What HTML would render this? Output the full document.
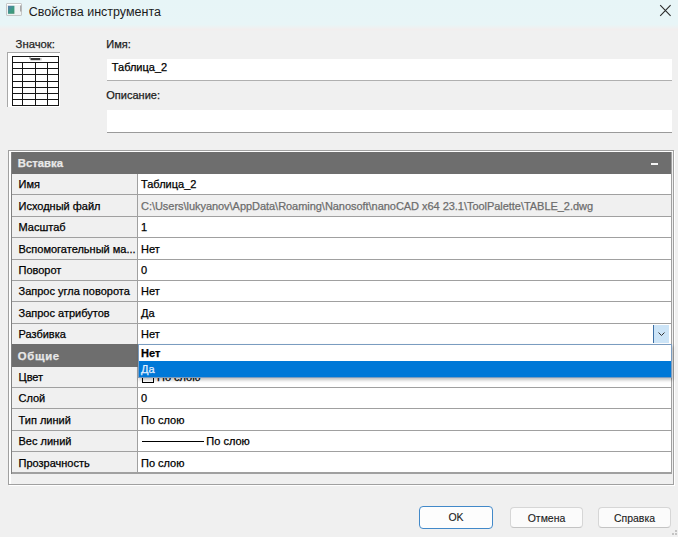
<!DOCTYPE html>
<html><head><meta charset="utf-8"><style>
html,body{margin:0;padding:0}
body{width:678px;height:537px;position:relative;overflow:hidden;background:#f0f0f0;font-family:"Liberation Sans", sans-serif}
.t{position:absolute;white-space:pre;line-height:20px;-webkit-text-stroke:0.25px currentColor}
.b{position:absolute}
</style></head><body>
<div class="b" style="left:0px;top:0px;width:678px;height:32px;background:linear-gradient(to bottom,#e7f5f7 0px,#e8f5f7 24.5px,#edf2f3 27px,#f2eeee 29.5px,#f0f0f0 31.5px)"></div>
<svg class="b" style="left:6px;top:3px" width="16" height="13" viewBox="0 0 16 13">
<defs><linearGradient id="g1" x1="0" y1="0" x2="1" y2="1"><stop offset="0" stop-color="#5c7bb0"/><stop offset="0.6" stop-color="#3a9c82"/><stop offset="1" stop-color="#4a8f70"/></linearGradient></defs>
<rect x="0.5" y="0.5" width="15" height="12" rx="0.5" fill="#eef2f2" stroke="#c6c8c8"/>
<line x1="1" y1="1.5" x2="15" y2="1.5" stroke="#fff"/>
<rect x="2" y="2.8" width="6.4" height="8" fill="url(#g1)"/>
<rect x="14" y="2.5" width="1.3" height="6" fill="#8c8c8c" opacity="0.7"/>
</svg>
<div class="t" style="left:28.80px;top:1.57px;font-size:12.5px;color:#1b1b1b;font-weight:400;-webkit-text-stroke:0">Свойства инструмента</div>
<svg class="b" style="left:658px;top:3px" width="15" height="15" viewBox="0 0 15 15">
<path d="M2.2 2.2 L12.6 12.8 M12.6 2.2 L2.2 12.8" stroke="#2b2b2b" stroke-width="1.1"/></svg>
<div class="t" style="left:15.60px;top:33.68px;font-size:11.3px;color:#262626;font-weight:400;">Значок:</div>
<div class="b" style="left:7px;top:52px;width:53px;height:55px;background:#fff;border-top:1px solid #a8a8a8;border-left:1px solid #a8a8a8;box-sizing:border-box"></div>
<svg class="b" style="left:0;top:0" width="70" height="110" viewBox="0 0 70 110"><line x1="12" y1="56.5" x2="59" y2="56.5" stroke="#151515" stroke-width="1"/><line x1="12" y1="62.5" x2="59" y2="62.5" stroke="#151515" stroke-width="1"/><line x1="12" y1="68.5" x2="59" y2="68.5" stroke="#151515" stroke-width="1"/><line x1="12" y1="74.5" x2="59" y2="74.5" stroke="#151515" stroke-width="1"/><line x1="12" y1="81.5" x2="59" y2="81.5" stroke="#151515" stroke-width="1"/><line x1="12" y1="87.5" x2="59" y2="87.5" stroke="#151515" stroke-width="1"/><line x1="12" y1="93.5" x2="59" y2="93.5" stroke="#151515" stroke-width="1"/><line x1="12" y1="99.5" x2="59" y2="99.5" stroke="#151515" stroke-width="1"/><line x1="12" y1="105.5" x2="59" y2="105.5" stroke="#151515" stroke-width="1"/><line x1="12.5" y1="56" x2="12.5" y2="106" stroke="#151515" stroke-width="1"/><line x1="58.5" y1="56" x2="58.5" y2="106" stroke="#151515" stroke-width="1"/><line x1="22.5" y1="62" x2="22.5" y2="105.5" stroke="#151515" stroke-width="1"/><line x1="35.5" y1="62" x2="35.5" y2="105.5" stroke="#151515" stroke-width="1"/><line x1="47.5" y1="62" x2="47.5" y2="105.5" stroke="#151515" stroke-width="1"/><rect x="30.5" y="58" width="9.5" height="2.2" fill="#3a3a3a"/><rect x="29.5" y="57" width="1" height="2" fill="#777"/><rect x="40.5" y="58" width="0.8" height="2.5" fill="#888"/></svg>
<div class="t" style="left:106.30px;top:34.19px;font-size:11px;color:#202020;font-weight:400;">Имя:</div>
<div class="b" style="left:107px;top:58.5px;width:565px;height:22.799999999999997px;background:#fff;border-bottom:1.5px solid #b0b0b0;box-sizing:border-box"></div>
<div class="t" style="left:111.80px;top:57.19px;font-size:11px;color:#000;font-weight:400;">Таблица_2</div>
<div class="t" style="left:106.30px;top:85.49px;font-size:11px;color:#202020;font-weight:400;">Описание:</div>
<div class="b" style="left:107px;top:109.5px;width:565px;height:23.0px;background:#fff;border-bottom:1.5px solid #9a9a9a;box-sizing:border-box"></div>
<div class="b" style="left:8px;top:150px;width:666px;height:335px;border:1px solid #a0a0a0;border-right-color:#a0a0a0;box-sizing:border-box;background:#f0f0f0;box-shadow:1px 1px 0 #fff"></div>
<div class="b" style="left:9px;top:151px;width:664px;height:333px;border-left:2px solid #fff;border-top:1px solid #fff;box-sizing:border-box"></div>
<div class="b" style="left:11px;top:152px;width:661px;height:322px;background:#a0a0a0"></div>
<div class="b" style="left:12px;top:152px;width:659px;height:22px;background:#6e6e6e"></div>
<div class="t" style="left:17.80px;top:153.08px;font-size:11.3px;color:#e8e8e8;font-weight:700;">Вставка</div>
<div class="b" style="left:651px;top:163px;width:7px;height:1.5999999999999943px;background:#f4f4f4"></div>
<div class="b" style="left:12px;top:174px;width:125px;height:20px;background:#f0f0f0"></div>
<div class="b" style="left:138px;top:174px;width:533px;height:20px;background:#fff"></div>
<div class="t" style="left:18.50px;top:174.39px;font-size:11px;color:#000;font-weight:400;">Имя</div>
<div class="t" style="left:141.00px;top:174.39px;font-size:11px;color:#000;font-weight:400;">Таблица_2</div>
<div class="b" style="left:12px;top:195px;width:125px;height:21px;background:#f0f0f0"></div>
<div class="b" style="left:138px;top:195px;width:533px;height:21px;background:#f0f0f0"></div>
<div class="t" style="left:18.50px;top:195.79px;font-size:11px;color:#000;font-weight:400;">Исходный файл</div>
<div class="t" style="left:141.00px;top:195.79px;font-size:11px;color:#6d6d6d;font-weight:400;letter-spacing:-0.04px">C:\Users\lukyanov\AppData\Roaming\Nanosoft\nanoCAD x64 23.1\ToolPalette\TABLE_2.dwg</div>
<div class="b" style="left:12px;top:217px;width:125px;height:20px;background:#f0f0f0"></div>
<div class="b" style="left:138px;top:217px;width:533px;height:20px;background:#fff"></div>
<div class="t" style="left:18.50px;top:217.19px;font-size:11px;color:#000;font-weight:400;">Масштаб</div>
<div class="t" style="left:141.00px;top:217.19px;font-size:11px;color:#000;font-weight:400;">1</div>
<div class="b" style="left:12px;top:238px;width:125px;height:21px;background:#f0f0f0"></div>
<div class="b" style="left:138px;top:238px;width:533px;height:21px;background:#fff"></div>
<div class="t" style="left:18.50px;top:238.59px;font-size:11px;color:#000;font-weight:400;">Вспомогательный ма...</div>
<div class="t" style="left:141.00px;top:238.59px;font-size:11px;color:#000;font-weight:400;">Нет</div>
<div class="b" style="left:12px;top:260px;width:125px;height:20px;background:#f0f0f0"></div>
<div class="b" style="left:138px;top:260px;width:533px;height:20px;background:#fff"></div>
<div class="t" style="left:18.50px;top:259.99px;font-size:11px;color:#000;font-weight:400;">Поворот</div>
<div class="t" style="left:141.00px;top:259.99px;font-size:11px;color:#000;font-weight:400;">0</div>
<div class="b" style="left:12px;top:281px;width:125px;height:20px;background:#f0f0f0"></div>
<div class="b" style="left:138px;top:281px;width:533px;height:20px;background:#fff"></div>
<div class="t" style="left:18.50px;top:281.39px;font-size:11px;color:#000;font-weight:400;">Запрос угла поворота</div>
<div class="t" style="left:141.00px;top:281.39px;font-size:11px;color:#000;font-weight:400;">Нет</div>
<div class="b" style="left:12px;top:302px;width:125px;height:21px;background:#f0f0f0"></div>
<div class="b" style="left:138px;top:302px;width:533px;height:21px;background:#fff"></div>
<div class="t" style="left:18.50px;top:302.79px;font-size:11px;color:#000;font-weight:400;">Запрос атрибутов</div>
<div class="t" style="left:141.00px;top:302.79px;font-size:11px;color:#000;font-weight:400;">Да</div>
<div class="b" style="left:12px;top:324px;width:125px;height:20px;background:#f0f0f0"></div>
<div class="b" style="left:138px;top:324px;width:533px;height:20px;background:#fff"></div>
<div class="t" style="left:18.50px;top:324.19px;font-size:11px;color:#000;font-weight:400;">Разбивка</div>
<div class="t" style="left:141.00px;top:324.19px;font-size:11px;color:#000;font-weight:400;">Нет</div>
<div class="b" style="left:12px;top:344px;width:659px;height:23px;background:#6e6e6e"></div>
<div class="t" style="left:17.80px;top:345.68px;font-size:11.3px;color:#e8e8e8;font-weight:700;letter-spacing:0.7px">Общие</div>
<div class="b" style="left:12px;top:367px;width:125px;height:20px;background:#f0f0f0"></div>
<div class="b" style="left:138px;top:367px;width:533px;height:20px;background:#fff"></div>
<div class="t" style="left:18.50px;top:366.99px;font-size:11px;color:#000;font-weight:400;">Цвет</div>
<div class="b" style="left:12px;top:388px;width:125px;height:20px;background:#f0f0f0"></div>
<div class="b" style="left:138px;top:388px;width:533px;height:20px;background:#fff"></div>
<div class="t" style="left:18.50px;top:388.39px;font-size:11px;color:#000;font-weight:400;">Слой</div>
<div class="t" style="left:141.00px;top:388.39px;font-size:11px;color:#000;font-weight:400;">0</div>
<div class="b" style="left:12px;top:409px;width:125px;height:21px;background:#f0f0f0"></div>
<div class="b" style="left:138px;top:409px;width:533px;height:21px;background:#fff"></div>
<div class="t" style="left:18.50px;top:409.79px;font-size:11px;color:#000;font-weight:400;">Тип линий</div>
<div class="t" style="left:141.00px;top:409.79px;font-size:11px;color:#000;font-weight:400;">По слою</div>
<div class="b" style="left:12px;top:431px;width:125px;height:20px;background:#f0f0f0"></div>
<div class="b" style="left:138px;top:431px;width:533px;height:20px;background:#fff"></div>
<div class="t" style="left:18.50px;top:431.19px;font-size:11px;color:#000;font-weight:400;">Вес линий</div>
<div class="b" style="left:12px;top:452px;width:125px;height:20px;background:#f0f0f0"></div>
<div class="b" style="left:138px;top:452px;width:533px;height:20px;background:#fff"></div>
<div class="t" style="left:18.50px;top:452.59px;font-size:11px;color:#000;font-weight:400;">Прозрачность</div>
<div class="t" style="left:141.00px;top:452.59px;font-size:11px;color:#000;font-weight:400;">По слою</div>
<div class="b" style="left:11px;top:152px;width:1px;height:322px;background:#808080"></div>
<div class="b" style="left:142px;top:441px;width:62px;height:1px;background:#000"></div>
<div class="t" style="left:206.30px;top:431.19px;font-size:11px;color:#000;font-weight:400;">По слою</div>
<div class="b" style="left:142px;top:371px;width:12px;height:12px;border:1px solid #000;box-sizing:border-box"></div>
<div class="t" style="left:157.00px;top:366.99px;font-size:11px;color:#000;font-weight:400;">По слою</div>
<div class="b" style="left:653px;top:325px;width:16px;height:18px;background:#cce4f7;border-left:1px solid #3c6fa5;box-sizing:border-box"></div>
<svg class="b" style="left:653px;top:325px" width="16" height="18" viewBox="0 0 16 18"><path d="M5.5 7.5 L8.5 10.5 L11.5 7.5" stroke="#333" fill="none" stroke-width="1"/></svg>
<div class="b" style="left:138px;top:344px;width:534px;height:33.60000000000002px;background:#fff;border:1px solid #7a9cc0;box-sizing:border-box;box-shadow:1px 2px 3px rgba(0,0,0,0.25)"></div>
<div class="b" style="left:139px;top:361px;width:532px;height:15.600000000000023px;background:#0078d7"></div>
<div class="t" style="left:141.00px;top:342.79px;font-size:11px;color:#000;font-weight:700;">Нет</div>
<div class="t" style="left:141.00px;top:358.59px;font-size:11px;color:#e2f0ff;font-weight:400;">Да</div>
<div class="b" style="left:675px;top:530px;width:2px;height:2px;background:#c4c4c4"></div>
<div class="b" style="left:672px;top:533px;width:2px;height:2px;background:#c4c4c4"></div>
<div class="b" style="left:675px;top:533px;width:2px;height:2px;background:#c4c4c4"></div>
<div class="b" style="left:419px;top:506px;width:74px;height:22.5px;background:#fdfdfd;border:1.6px solid #4289c9;border-radius:4px;box-sizing:border-box"></div>
<div class="t" style="left:419px;top:506px;width:74px;height:22.5px;line-height:23.7px;text-align:center;font-size:10.5px;color:#1a1a1a;-webkit-text-stroke:0.1px currentColor">OK</div>
<div class="b" style="left:510px;top:507px;width:73px;height:21px;background:#fbfbfb;border:1px solid #d6d6d6;border-bottom-color:#c4c4c4;border-radius:4px;box-sizing:border-box"></div>
<div class="t" style="left:510px;top:507px;width:73px;height:21px;line-height:22.2px;text-align:center;font-size:10.5px;color:#1a1a1a;-webkit-text-stroke:0.1px currentColor">Отмена</div>
<div class="b" style="left:598px;top:507px;width:73px;height:21px;background:#fbfbfb;border:1px solid #d6d6d6;border-bottom-color:#c4c4c4;border-radius:4px;box-sizing:border-box"></div>
<div class="t" style="left:598px;top:507px;width:73px;height:21px;line-height:22.2px;text-align:center;font-size:10.5px;color:#1a1a1a;-webkit-text-stroke:0.1px currentColor">Справка</div>
</body></html>
